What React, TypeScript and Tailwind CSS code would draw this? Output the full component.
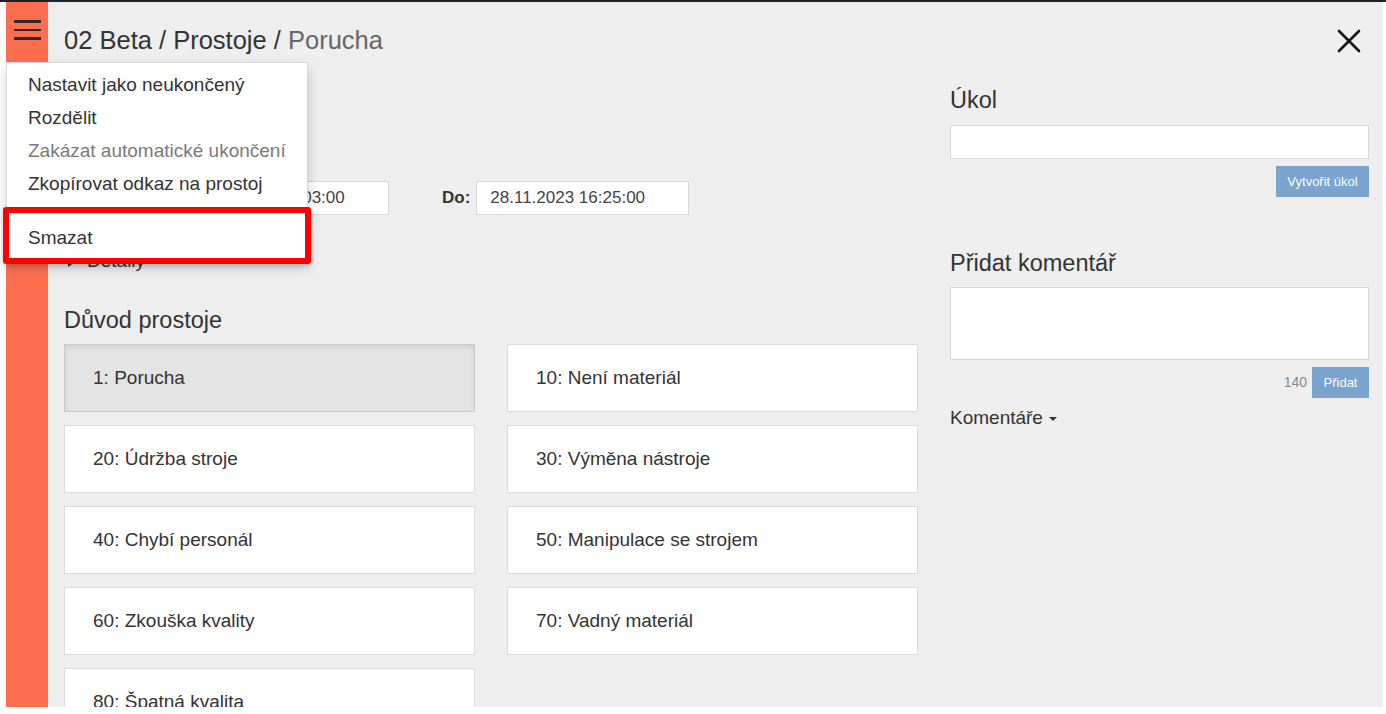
import React from 'react';

const reasons = [
  { code: 1, label: 'Porucha', active: true },
  { code: 10, label: 'Není materiál' },
  { code: 20, label: 'Údržba stroje' },
  { code: 30, label: 'Výměna nástroje' },
  { code: 40, label: 'Chybí personál' },
  { code: 50, label: 'Manipulace se strojem' },
  { code: 60, label: 'Zkouška kvality' },
  { code: 70, label: 'Vadný materiál' },
  { code: 80, label: 'Špatná kvalita' },
];

const menuItems = [
  { label: 'Nastavit jako neukončený' },
  { label: 'Rozdělit' },
  { label: 'Zakázat automatické ukončení', disabled: true },
  { label: 'Zkopírovat odkaz na prostoj' },
];

const Hamburger = () => (
  <div className="ml-[8px] mt-[18px] flex w-[27px] flex-col gap-[6px]">
    <div className="h-[2.5px] bg-[#2b2b2b]" />
    <div className="h-[2.5px] bg-[#2b2b2b]" />
    <div className="h-[2.5px] bg-[#2b2b2b]" />
  </div>
);

const CloseIcon = () => (
  <svg width="24" height="24" viewBox="0 0 24 24" className="mr-[8px] mt-[2px]">
    <path d="M2 2 L22 22 M22 2 L2 22" stroke="#111" strokeWidth="2.6" strokeLinecap="round" />
  </svg>
);

const DateInput = ({ value }: { value: string }) => (
  <div className="flex h-[34px] w-[213px] items-center border border-[#d6d6d6] bg-white pl-[13px] text-[17px] text-[#444]">
    {value}
  </div>
);

const DropdownMenu = () => (
  <div className="absolute left-[6px] top-[62px] w-[302px] border border-[#d8d8d8] bg-white py-[6px] text-[19px] text-[#333] shadow-[0_6px_12px_rgba(0,0,0,0.18)]">
    {menuItems.map((item) => (
      <div
        key={item.label}
        className={`flex h-[33px] items-center pl-[21px] ${item.disabled ? 'text-[#7a7a7a]' : ''}`}
      >
        {item.label}
      </div>
    ))}
    <div className="my-[10px] h-px bg-[#e5e5e5]" />
    <div className="flex h-[33px] items-center pl-[21px]">Smazat</div>
  </div>
);

const App = () => {
  return (
    <div className="relative flex h-[714px] w-[1386px] flex-col overflow-hidden bg-white font-['Liberation_Sans',Arial,sans-serif] text-[#333]">
      <div className="h-[2px] bg-[#1d2227]" />
      <div className="flex h-[705px]">
        <div className="w-[6px] bg-white" />
        <div className="w-[42px] bg-[#fd6e51]">
          <Hamburger />
        </div>
        <div className="flex flex-1 flex-col overflow-hidden bg-[#eeeeee] pl-[16px] pr-[14px] pt-[23px]">
          <div className="flex h-[30px] items-center justify-between">
            <div className="text-[25.5px] leading-[30px]">
              02 Beta / Prostoje / <span className="text-[#666]">Porucha</span>
            </div>
            <CloseIcon />
          </div>

          <div className="flex gap-[32px]">
            {/* left column, top part sits under the open menu */}
            <div className="flex w-[854px] flex-col">
              <div className="mt-[126px] flex items-center pl-[112px]">
                <DateInput value="28.11.2023 16:03:00" />
                <span className="ml-[53px] mr-[6px] text-[17px] font-bold">Do:</span>
                <DateInput value="28.11.2023 16:25:00" />
              </div>
              <div className="mt-[34px] flex h-[24px] items-center gap-[11px] pl-[4px] text-[19px]">
                <svg width="8" height="11" viewBox="0 0 8 11">
                  <polygon points="0,0 8,5.5 0,11" fill="#333" />
                </svg>
                <span>Detaily</span>
              </div>
              <div className="mt-[33px] text-[23.5px] leading-[28px]">Důvod prostoje</div>
              <div className="mt-[10px] grid grid-cols-2 gap-x-[32px] gap-y-[13px]">
                {reasons.map((r) => (
                  <div
                    key={r.code}
                    className={`flex h-[68px] items-center pl-[28px] text-[19px] ${
                      r.active
                        ? 'border border-[#c9c9c9] bg-[#e4e4e4] shadow-[inset_0_3px_5px_rgba(0,0,0,0.08)]'
                        : 'border border-[#dcdcdc] bg-white'
                    }`}
                  >
                    {r.code}: {r.label}
                  </div>
                ))}
              </div>
            </div>

            {/* right column */}
            <div className="flex w-[419px] flex-col">
              <div className="mt-[31px] text-[23.5px] leading-[28px]">Úkol</div>
              <div className="mt-[11px] h-[34px] border border-[#d6d6d6] bg-white" />
              <div className="mt-[7px] flex justify-end">
                <div className="flex h-[31px] w-[93px] items-center justify-center bg-[#7aa3cd] text-[13px] text-white">
                  Vytvořit úkol
                </div>
              </div>
              <div className="mt-[52px] text-[23.5px] leading-[28px]">Přidat komentář</div>
              <div className="mt-[10px] h-[73px] border border-[#d6d6d6] bg-white" />
              <div className="mt-[7px] flex items-center justify-end gap-[5px]">
                <span className="text-[14px] text-[#888]">140</span>
                <div className="flex h-[31px] w-[57px] items-center justify-center bg-[#7aa3cd] text-[13px] text-white">
                  Přidat
                </div>
              </div>
              <div className="mt-[8px] flex items-center gap-[6px] text-[19px] leading-[24px]">
                <span>Komentáře</span>
                <span className="mt-[2px] h-0 w-0 border-x-[4px] border-t-[4px] border-x-transparent border-t-[#333]" />
              </div>
            </div>
          </div>
        </div>
        <div className="w-[3px] bg-white" />
      </div>

      <DropdownMenu />
      <div className="absolute left-[3px] top-[207px] h-[57px] w-[308px] rounded-[3px] border-[6px] border-[#fe0000] shadow-[0_2px_4px_rgba(0,0,0,0.15)]" />
    </div>
  );
};

export default App;
